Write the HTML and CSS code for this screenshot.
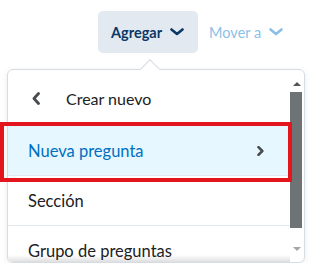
FILE: index.html
```html
<!DOCTYPE html>
<html lang="es">
<head>
    <meta charset="UTF-8">
    <meta name="viewport" content="width=device-width, initial-scale=1.0">
    <title>Agregar</title>
    <link rel="stylesheet" href="styles.css">
</head>
<body>
    <div class="toolbar">
        <button class="menu-btn open">Agregar
            <svg class="caret" viewBox="0 0 14 8"><path d="M1.5 1.5 L7 6 L12.5 1.5"/></svg>
        </button>
        <button class="menu-btn muted">Mover a
            <svg class="caret" viewBox="0 0 14 8"><path d="M1.5 1.5 L7 6 L12.5 1.5"/></svg>
        </button>
    </div>

    <div class="dropdown">
        <span class="pointer"></span>
        <div class="menu">
            <div class="menu-list">
                <div class="menu-head">
                    <svg class="back" viewBox="0 0 8 13"><path d="M6.5 1.5 L2 6.5 L6.5 11.5"/></svg>
                    <span>Crear nuevo</span>
                </div>
                <div class="menu-item selected">
                    <span>Nueva pregunta</span>
                    <svg class="next" viewBox="0 0 7 10"><path d="M1.5 1.2 L5.3 5 L1.5 8.8"/></svg>
                </div>
                <div class="menu-item"><span>Sección</span></div>
                <div class="menu-item"><span>Grupo de preguntas</span></div>
            </div>
            <div class="scrollbar">
                <div class="sb-up"><span class="tri up"></span></div>
                <div class="sb-thumb"></div>
                <div class="sb-down"><span class="tri down"></span></div>
            </div>
        </div>
        <!-- highlight around the item -->
        <div class="callout"></div>
    </div>
</body>
</html>
```

FILE: styles.css
```css
body {
    font-family: 'Lato', 'Noto Sans', sans-serif;
    background-color: #fff;
    margin: 0;
    color: #202122;
}
.toolbar {
    display: flex;
    padding: 11px 0 0 98px;
}
.menu-btn {
    display: flex;
    align-items: center;
    height: 42px;
    border: none;
    border-radius: 5px;
    background: none;
    font-family: inherit;
    font-size: 14.5px;
    padding: 0 14px 0 13px;
    cursor: pointer;
}
.menu-btn.open {
    background-color: #e3e9f1;
    color: #0b3967;
    font-weight: bold;
}
.menu-btn.muted {
    color: #8cbfe6;
    padding-left: 11px;
}
.caret {
    width: 14px;
    height: 8px;
    margin-left: 8px;
    fill: none;
    stroke: currentColor;
    stroke-width: 2.6;
    stroke-linecap: round;
    stroke-linejoin: round;
}
.dropdown {
    position: relative;
    box-sizing: border-box;
    margin: 16px 0 0 7px;
    width: 298px;
    height: 194px;
    border: 1px solid #d6dce3;
    border-radius: 6px;
    background-color: #fff;
    box-shadow: 0 2px 6px rgba(0, 0, 0, 0.08);
}
.pointer {
    position: absolute;
    left: 135px;
    top: -8px;
    width: 14px;
    height: 14px;
    box-sizing: border-box;
    background-color: #fff;
    border-top: 1px solid #d6dce3;
    border-left: 1px solid #d6dce3;
    transform: rotate(45deg);
}
.menu {
    display: flex;
    height: 100%;
    border-radius: 6px;
    overflow: hidden;
}
.menu-list {
    position: relative;
    flex: 1;
    overflow: hidden;
}
.menu-list::after {
    content: '';
    position: absolute;
    left: 0;
    right: 0;
    bottom: 0;
    height: 7px;
    background: linear-gradient(rgba(0, 0, 0, 0), rgba(0, 0, 0, 0.13));
}
.menu-head {
    display: flex;
    align-items: center;
    height: 56px;
    font-size: 16px;
}
.back {
    width: 8px;
    height: 13px;
    margin: 0 26px 0 24px;
    fill: none;
    stroke: #494c4e;
    stroke-width: 2.8;
    stroke-linecap: round;
    stroke-linejoin: round;
}
.menu-item {
    display: flex;
    align-items: center;
    justify-content: space-between;
    height: 49px;
    padding: 0 26px 0 20px;
    border-bottom: 1px solid #e3e9f1;
    font-size: 16.5px;
}
.menu-item.selected {
    background-color: #e6f7ff;
    color: #006fbf;
}
.next {
    width: 7px;
    height: 10px;
    fill: none;
    stroke: #494c4e;
    stroke-width: 2.6;
    stroke-linecap: round;
    stroke-linejoin: round;
}
.scrollbar {
    display: flex;
    flex-direction: column;
    width: 14px;
}
.sb-up {
    display: flex;
    justify-content: center;
    align-items: flex-end;
    height: 22px;
    padding-bottom: 6px;
    box-sizing: border-box;
}
.sb-thumb {
    width: 12px;
    height: 136px;
    background-color: #6e7376;
}
.sb-down {
    flex: 1;
    display: flex;
    justify-content: center;
    align-items: flex-end;
    padding-bottom: 11px;
}
.tri {
    width: 0;
    height: 0;
    border-left: 4px solid transparent;
    border-right: 4px solid transparent;
}
.tri.up {
    border-bottom: 4px solid #505457;
}
.tri.down {
    border-top: 4px solid #a3a6a9;
}
.callout {
    position: absolute;
    left: -8px;
    top: 52px;
    width: 292px;
    height: 60px;
    box-sizing: border-box;
    border: 4px solid #e3161d;
}
```
